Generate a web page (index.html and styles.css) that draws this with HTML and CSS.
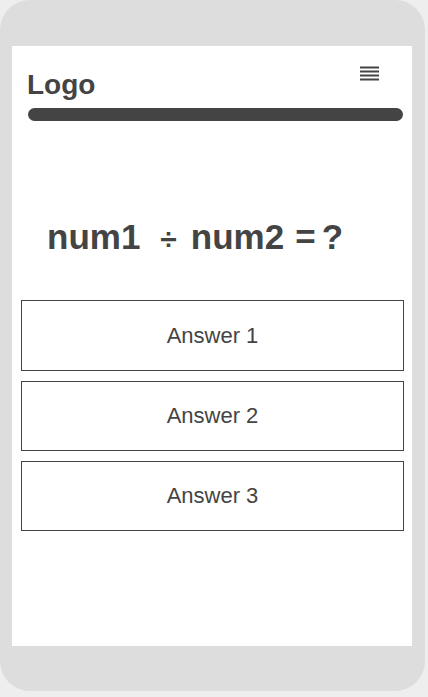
FILE: index.html
```html
<!DOCTYPE html>
<html>
<head>
<meta charset="utf-8">
<link rel="stylesheet" href="styles.css">
</head>
<body>
<div class="phone">
  <div class="screen">
    <header class="header">
      <div class="logo">Logo</div>
      <svg class="menu" width="20" height="16" viewBox="0 0 20 16">
        <rect x="0" y="0.5" width="19" height="2" fill="#444"/>
        <rect x="0" y="4.5" width="19" height="2" fill="#444"/>
        <rect x="0" y="8.5" width="19" height="2" fill="#444"/>
        <rect x="0" y="12.5" width="19" height="2" fill="#444"/>
      </svg>
    </header>
    <div class="bar"></div>
    <div class="question"><span>num1</span><span class="op">÷</span><span>num2</span><span class="eq">=</span><span class="q">?</span></div>
    <div class="answers">
      <div class="answer">Answer 1</div>
      <div class="answer">Answer 2</div>
      <div class="answer">Answer 3</div>
    </div>
  </div>
</div>
</body>
</html>
```

FILE: styles.css
```css
html, body {
  margin: 0;
  padding: 0;
  background: #eeeeee;
}
body {
  font-family: "Liberation Sans", Arial, sans-serif;
  color: #444444;
  width: 428px;
  height: 697px;
}
.phone {
  width: 425px;
  height: 691px;
  background: #dddddd;
  border-radius: 30px;
  padding-top: 46px;
  box-sizing: border-box;
}
.screen {
  margin-left: 12px;
  width: 400px;
  height: 600px;
  background: #ffffff;
  box-sizing: border-box;
  padding-top: 19px;
}
.header {
  display: flex;
  justify-content: space-between;
  align-items: flex-start;
  padding-left: 15px;
  padding-right: 32px;
}
.logo {
  font-size: 28px;
  font-weight: bold;
  line-height: 32px;
  margin-top: 4px;
}
.menu {
  display: block;
  margin-top: 1px;
}
.bar {
  margin: 7px 9px 0 16px;
  height: 13px;
  border-radius: 7px;
  background: #444444;
}
.question {
  margin-top: 96px;
  padding-left: 35px;
  font-size: 35px;
  font-weight: bold;
  line-height: 40px;
  display: flex;
  align-items: baseline;
}
.op {
  font-size: 30px;
  margin: 0 14px 0 20px;
}
.eq {
  margin: 0 6px 0 11px;
}
.answers {
  margin: 41px 8px 0 9px;
  display: flex;
  flex-direction: column;
  gap: 10px;
}
.answer {
  height: 70px;
  box-sizing: border-box;
  border: 1px solid #444444;
  display: flex;
  align-items: center;
  justify-content: center;
  font-size: 22px;
}
.answer:first-child {
  height: 71px;
}
```
